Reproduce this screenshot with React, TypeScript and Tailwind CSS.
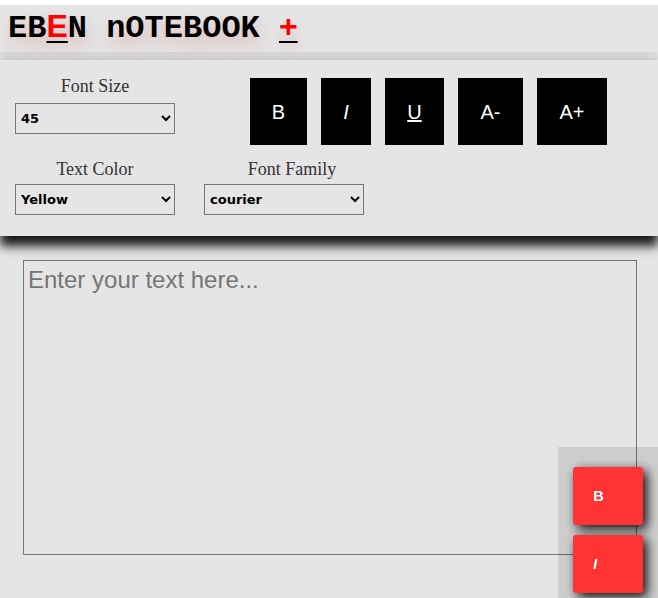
import { useState } from "react";

const labelCls =
  "block text-center text-[18px] leading-[24px] text-[#333] font-['Liberation_Serif',serif]";
const selectCls =
  "w-[160px] h-[31px] border border-[#767676] bg-transparent pl-[1px] text-[13px] font-bold text-black font-['DejaVu_Sans',sans-serif]";
const btnCls = "h-[67px] bg-black text-center";

const App = () => {
  const [text, setText] = useState("");
  const [size, setSize] = useState("45");
  const [color, setColor] = useState("Yellow");
  const [family, setFamily] = useState("courier");

  return (
    <div className="min-h-[598px] bg-white pt-[5px] overflow-hidden">
      <div className="min-h-[593px] bg-[#e5e5e5]">
        {/* header */}
        <div className="relative z-10 h-[47px] bg-[#e5e5e5] pl-[8px] pt-[5px] shadow-[0_3px_6px_rgba(0,0,0,0.08)]">
          <h1 className="text-[32px] leading-[32px] font-bold text-black font-['Liberation_Mono',monospace] [text-shadow:2px_8px_18px_rgba(200,0,0,0.22)]">
            EB
            <span className="underline decoration-black decoration-2 underline-offset-[4px]">
              <span className="text-[#ff0000] font-['Liberation_Sans',sans-serif]">E</span>
            </span>
            N nOTEBOOK{" "}
            <span className="underline decoration-black decoration-2 underline-offset-[4px]">
              <span className="text-[#ff0000] font-['Liberation_Sans',sans-serif]">+</span>
            </span>
          </h1>
        </div>

        {/* toolbar */}
        <div className="relative z-20 mt-[8px] bg-[#e5e5e5] px-[15px] pt-[14px] pb-[21px] shadow-[0_10px_10px_rgba(0,0,0,0.9),0_-3px_5px_rgba(0,0,0,0.1)]">
          <div className="flex items-start">
            <div className="w-[160px]">
              <label className={labelCls}>Font Size</label>
              <select
                className={selectCls + " mt-[5px]"}
                value={size}
                onChange={(e) => setSize(e.target.value)}
              >
                <option>12</option>
                <option>24</option>
                <option>45</option>
              </select>
            </div>
            <div className="ml-[75px] mt-[4px] flex gap-[14px] font-['Liberation_Sans',sans-serif] text-[20px] text-white">
              <button className={btnCls + " w-[57px]"}>B</button>
              <button className={btnCls + " w-[50px] italic"}>I</button>
              <button className={btnCls + " w-[59px] underline"}>U</button>
              <button className={btnCls + " w-[65px]"}>A-</button>
              <button className={btnCls + " w-[70px]"}>A+</button>
            </div>
          </div>
          <div className="mt-[12px] flex gap-[29px]">
            <div className="w-[160px]">
              <label className={labelCls}>Text Color</label>
              <select
                className={selectCls + " mt-[3px]"}
                value={color}
                onChange={(e) => setColor(e.target.value)}
              >
                <option>Black</option>
                <option>Yellow</option>
                <option>Red</option>
              </select>
            </div>
            <div className="w-[160px]">
              <label className={labelCls + " pl-[16px]"}>Font Family</label>
              <select
                className={selectCls + " mt-[3px]"}
                value={family}
                onChange={(e) => setFamily(e.target.value)}
              >
                <option>arial</option>
                <option>courier</option>
                <option>verdana</option>
              </select>
            </div>
          </div>
        </div>

        {/* editor */}
        <textarea
          className="ml-[23px] mt-[24px] block h-[295px] w-[614px] border border-[#767676] bg-transparent px-[4px] pt-[1px] pb-[4px] text-[24px] leading-normal text-black placeholder:text-[#757575] font-['Liberation_Sans',sans-serif]"
          placeholder="Enter your text here..."
          value={text}
          onChange={(e) => setText(e.target.value)}
        />
      </div>

      {/* floating quick buttons */}
      <div className="fixed left-[558px] top-[447px] h-[160px] w-[110px] bg-black/10 pl-[15px] pt-[20px]">
        <div className="flex flex-col gap-[10px] font-['Liberation_Sans',sans-serif] text-[15px] font-bold text-white">
          <button className="h-[58px] w-[70px] rounded-[3px] bg-[#ff3333] pl-[20px] text-left shadow-[4px_4px_12px_rgba(0,0,0,0.95)]">
            B
          </button>
          <button className="h-[58px] w-[70px] rounded-[3px] bg-[#ff3333] pl-[20px] text-left italic shadow-[4px_4px_12px_rgba(0,0,0,0.95)]">
            I
          </button>
        </div>
      </div>
    </div>
  );
};

export default App;
